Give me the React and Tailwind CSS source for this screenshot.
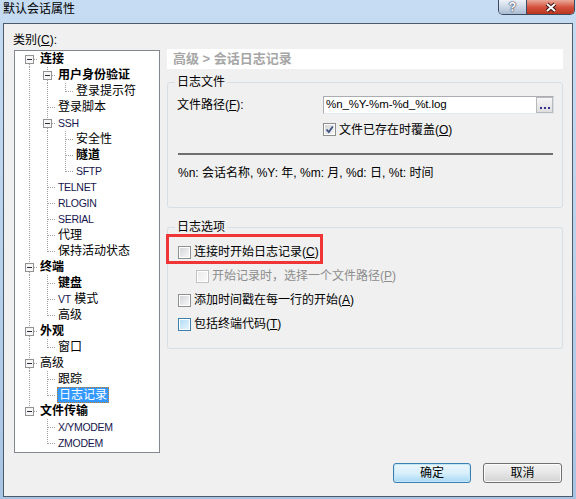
import React from "react";

const tree = [
  { lv: 0, t: "连接", b: true, box: true },
  { lv: 1, t: "用户身份验证", b: true, box: true },
  { lv: 2, t: "登录提示符" },
  { lv: 1, t: "登录脚本" },
  { lv: 1, t: "SSH", latin: true, box: true },
  { lv: 2, t: "安全性" },
  { lv: 2, t: "隧道", b: true },
  { lv: 2, t: "SFTP", latin: true },
  { lv: 1, t: "TELNET", latin: true },
  { lv: 1, t: "RLOGIN", latin: true },
  { lv: 1, t: "SERIAL", latin: true },
  { lv: 1, t: "代理" },
  { lv: 1, t: "保持活动状态" },
  { lv: 0, t: "终端", b: true, box: true },
  { lv: 1, t: "键盘", b: true },
  { lv: 1, t: "VT 模式", vt: true },
  { lv: 1, t: "高级" },
  { lv: 0, t: "外观", b: true, box: true },
  { lv: 1, t: "窗口" },
  { lv: 0, t: "高级", box: true },
  { lv: 1, t: "跟踪" },
  { lv: 1, t: "日志记录", sel: true },
  { lv: 0, t: "文件传输", b: true, box: true },
  { lv: 1, t: "X/YMODEM", latin: true },
  { lv: 1, t: "ZMODEM", latin: true },
];

function nextSib(i) {
  for (let j = i + 1; j < tree.length; j++) {
    if (tree[j].lv < tree[i].lv) return false;
    if (tree[j].lv === tree[i].lv) return true;
  }
  return false;
}

function prevSib(i) {
  for (let j = i - 1; j >= 0; j--) {
    if (tree[j].lv < tree[i].lv) return false;
    if (tree[j].lv === tree[i].lv) return true;
  }
  return false;
}

function ancestor(i, k) {
  for (let j = i - 1; j >= 0; j--) if (tree[j].lv === k) return j;
  return -1;
}

const dot = { stroke: "#a0a0a0", strokeWidth: 1, strokeDasharray: "1 1" };

function Cell({ kind, up, down }) {
  return (
    <svg width="18" height="16" className="shrink-0">
      {kind === "pipe" && <line x1="9.5" y1="0" x2="9.5" y2="16" {...dot} />}
      {kind === "tee" && (
        <>
          <line x1="9.5" y1="0" x2="9.5" y2="16" {...dot} />
          <line x1="10" y1="8.5" x2="18" y2="8.5" {...dot} />
        </>
      )}
      {kind === "elbow" && (
        <>
          <line x1="9.5" y1="0" x2="9.5" y2="9" {...dot} />
          <line x1="10" y1="8.5" x2="18" y2="8.5" {...dot} />
        </>
      )}
      {kind === "box" && (
        <>
          {up && <line x1="9.5" y1="0" x2="9.5" y2="4" {...dot} />}
          {down && <line x1="9.5" y1="13" x2="9.5" y2="16" {...dot} />}
          <line x1="14" y1="8.5" x2="18" y2="8.5" {...dot} />
          <rect x="5.5" y="4.5" width="8" height="8" fill="#f6f6f6" stroke="#929292" />
          <line x1="7" y1="8.5" x2="12" y2="8.5" stroke="#2b2b3b" />
        </>
      )}
    </svg>
  );
}

function TreeRow({ i }) {
  const r = tree[i];
  const cells = [];
  for (let k = 0; k < r.lv; k++) {
    const a = ancestor(i, k);
    cells.push(<Cell key={k} kind={a >= 0 && nextSib(a) ? "pipe" : "blank"} />);
  }
  if (r.box) {
    cells.push(<Cell key="own" kind="box" up={r.lv > 0 || prevSib(i)} down={nextSib(i)} />);
  } else {
    cells.push(<Cell key="own" kind={nextSib(i) ? "tee" : "elbow"} />);
  }
  let label;
  if (r.sel) {
    label = (
      <span className="ml-[1px] px-[1px] h-[16px] leading-[14px] bg-[#3399ff] text-white border border-dotted border-[#c07a28]">
        {r.t}
      </span>
    );
  } else if (r.vt) {
    label = (
      <span className="ml-[2px]">
        <span className="text-[#16164e] text-[10.5px] tracking-[-0.3px]">VT</span> 模式
      </span>
    );
  } else {
    label = (
      <span
        className={`ml-[2px] ${r.b ? "font-bold" : ""} ${
          r.latin ? "text-[#16164e] text-[10.5px] tracking-[-0.3px]" : "text-black"
        }`}
      >
        {r.t}
      </span>
    );
  }
  return (
    <div className="flex items-center h-[16px] leading-[16px] text-[12px] whitespace-nowrap">
      {cells}
      {label}
    </div>
  );
}

function CheckBox({ checked, disabled, hot }) {
  const outer = disabled ? "border-[#c2c2c2]" : hot ? "border-[#3c7fb1]" : "border-[#8e8f8f]";
  const inner = disabled
    ? "from-[#ececec] to-[#f8f8f8]"
    : hot
    ? "from-[#b4def6] to-[#e4f4fc]"
    : "from-[#d4d5d8] to-[#f7f7f7]";
  return (
    <div className={`relative w-[13px] h-[13px] shrink-0 border ${outer} bg-white p-[1px]`}>
      <div className={`w-full h-full bg-linear-to-br ${inner}`} />
      {checked && (
        <svg width="11" height="11" className="absolute left-0 top-0">
          <path d="M2.5 5.5 L4.8 8 L8.8 2.5" fill="none" stroke="#3f5382" strokeWidth="1.8" />
        </svg>
      )}
    </div>
  );
}

function Key({ k }) {
  return (
    <>
      (<span className="underline underline-offset-1">{k}</span>)
    </>
  );
}

export default function App() {
  return (
    <div className="w-[576px] h-[499px] overflow-hidden bg-linear-to-b from-[#c6dcf2] via-[#b9d2ec] to-[#a7c4e4] font-['Liberation_Sans','Noto_Sans_CJK_SC',sans-serif] text-black">
      {/* title bar */}
      <div className="h-[23px] flex items-start">
        <div className="pl-[3px] pt-[2px] text-[12px] leading-[14px]">默认会话属性</div>
        <div className="ml-auto mr-[1px] flex h-[15px] border border-t-0 border-[#3b4b61] rounded-b-[5px] overflow-hidden">
          <div className="w-[27px] bg-linear-to-b from-[#edf2f8] via-[#cdd8e6] to-[#a9bbd2] flex items-center justify-center text-white font-bold text-[12px] leading-[12px] [text-shadow:0_0_2px_#1d2b40,0_0_1px_#1d2b40]">
            ?
          </div>
          <div className="w-[48px] border-l border-[#3b4b61] bg-linear-to-b from-[#e9a999] via-[#d4533e] to-[#b9341f] flex items-center justify-center">
            <svg width="14" height="11">
              <path d="M3 2 L11 9 M11 2 L3 9" stroke="#3a1410" strokeWidth="4" />
              <path d="M3 2 L11 9 M11 2 L3 9" stroke="#ffffff" strokeWidth="2" />
            </svg>
          </div>
        </div>
      </div>

      {/* client */}
      <div className="ml-[3px] w-[570px] h-[474px] border border-[#4d5a6a] bg-[#f0f0f0] flex flex-col">
        <div className="flex pl-[10px]">
          <div className="w-[146px] shrink-0">
            <div className="h-[26px] pt-[8px] leading-[16px] text-[12px] -ml-[1px]">
              类别<Key k="C" />:
            </div>
            <div className="h-[403px] border border-[#828790] bg-white pl-[5px] overflow-hidden">
              {tree.map((_, i) => (
                <TreeRow key={i} i={i} />
              ))}
            </div>
          </div>

          <div className="w-[396px] ml-[7px] pt-[25px] text-[12px]">
            <div className="h-[20px] bg-white pl-[6px] leading-[20px] text-[13px] font-bold text-[#a6a6a6]">
              高级 &gt; 会话日志记录
            </div>

            <fieldset className="mt-[6px] h-[133px] border border-[#d5dfe5] rounded-[3px]">
              <legend className="ml-[7px] px-[2px] leading-[14px]">日志文件</legend>
              <div className="mt-[7px] flex items-center pl-[9px]">
                <div className="w-[146px]">
                  文件路径<Key k="F" />:
                </div>
                <div className="w-[231px] h-[18px] flex items-center border border-[#abadb3] border-b-[#e3e9ef] border-r-[#dbdfe6] bg-white">
                  <span className="pl-[2px] text-[11.5px] tracking-[-0.1px] text-black">%n_%Y-%m-%d_%t.log</span>
                  <div className="ml-auto mr-[0px] w-[17px] h-[16px] border border-[#b9b9b9] bg-linear-to-b from-[#f6f6f6] to-[#dedede] flex items-end justify-center gap-[2px] pb-[3px]">
                    <div className="w-[2px] h-[2px] bg-[#34348e]" />
                    <div className="w-[2px] h-[2px] bg-[#34348e]" />
                    <div className="w-[2px] h-[2px] bg-[#34348e]" />
                  </div>
                </div>
              </div>
              <div className="mt-[9px] ml-[155px] flex items-center gap-[3px] h-[13px]">
                <CheckBox checked />
                <span>
                  文件已存在时覆盖<Key k="O" />
                </span>
              </div>
              <div className="mt-[17px] ml-[10px] w-[375px] h-[2px] bg-[#6e6e6e]" />
              <div className="mt-[11px] ml-[10px] leading-[14px]">
                %n: 会话名称, %Y: 年, %m: 月, %d: 日, %t: 时间
              </div>
            </fieldset>

            <fieldset className="mt-[12px] h-[129px] border border-[#d5dfe5] rounded-[3px]">
              <legend className="ml-[7px] px-[2px] leading-[14px]">日志选项</legend>
              <div className="relative mt-[6px] h-[24px] pl-[10px] flex items-center gap-[3px]">
                <CheckBox />
                <span>
                  连接时开始日志记录<Key k="C" />
                </span>
                <div className="absolute -left-[2px] -top-[6px] w-[157px] h-[30px] border-[3px] border-[#ef3535]" />
              </div>
              <div className="h-[24px] pl-[28px] flex items-center gap-[3px] text-[#8d8d8d]">
                <CheckBox disabled />
                <span>
                  开始记录时，选择一个文件路径<Key k="P" />
                </span>
              </div>
              <div className="h-[24px] pl-[10px] flex items-center gap-[3px]">
                <CheckBox />
                <span>
                  添加时间戳在每一行的开始<Key k="A" />
                </span>
              </div>
              <div className="h-[24px] pl-[10px] flex items-center gap-[3px]">
                <CheckBox hot />
                <span>
                  包括终端代码<Key k="T" />
                </span>
              </div>
            </fieldset>
          </div>
        </div>

        <div className="mt-[10px] flex justify-end gap-[12px] pr-[10px] text-[12px]">
          <button className="w-[78px] h-[20px] rounded-[3px] border border-[#3c7fb1] bg-linear-to-b from-[#eaf6fd] via-[#d9f0fc] to-[#a7d9f5] shadow-[inset_0_0_0_1px_#c4e5f6] leading-[18px]">
            确定
          </button>
          <button className="w-[79px] h-[20px] rounded-[3px] border border-[#707070] bg-linear-to-b from-[#f2f2f2] via-[#e6e6e6] to-[#d2d2d2] shadow-[inset_0_0_0_1px_#fbfbfb] leading-[18px]">
            取消
          </button>
        </div>
      </div>
    </div>
  );
}
